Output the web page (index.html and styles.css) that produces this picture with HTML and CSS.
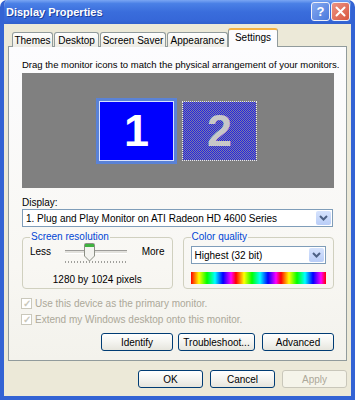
FILE: index.html
```html
<!DOCTYPE html>
<html lang="en">
<head>
    <meta charset="UTF-8">
    <title>Display Properties</title>
    <link rel="stylesheet" href="styles.css">
</head>
<body>
    <div class="window">
        <div class="titlebar">
            <span class="title">Display Properties</span>
            <div class="caption-buttons">
                <span class="cap-btn help">?</span>
                <span class="cap-btn close">
                    <svg width="11" height="11" viewBox="0 0 11 11"><path d="M1.5 1.5 L9.5 9.5 M9.5 1.5 L1.5 9.5" stroke="#fff" stroke-width="2" stroke-linecap="round"/></svg>
                </span>
            </div>
        </div>

        <div class="frame">
            <div class="tabs">
                <div class="tab">Themes</div>
                <div class="tab">Desktop</div>
                <div class="tab">Screen Saver</div>
                <div class="tab">Appearance</div>
                <div class="tab active">Settings</div>
            </div>

            <div class="panel">
                <div class="hint">Drag the monitor icons to match the physical arrangement of your monitors.</div>

                <div class="monitors">
                    <div class="monitor primary">
                        <div class="screen">1</div>
                    </div>
                    <div class="monitor secondary">
                        <div class="screen">2</div>
                    </div>
                </div>

                <div class="label">Display:</div>
                <div class="select wide">
                    <span>1. Plug and Play Monitor on ATI Radeon HD 4600 Series</span>
                    <span class="arrow"><svg width="9" height="6" viewBox="0 0 9 6"><path d="M1 1 L4.5 4.5 L8 1" fill="none" stroke="#4d6185" stroke-width="2"/></svg></span>
                </div>

                <div class="groups">
                    <fieldset class="group">
                        <legend>Screen resolution</legend>
                        <div class="slider-row">
                            <span>Less</span>
                            <div class="slider">
                                <div class="track"></div>
                                <div class="thumb">
                                    <svg width="11" height="19" viewBox="0 0 11 19">
                                        <path d="M0.5 1.5 Q0.5 0.5 1.5 0.5 L9.5 0.5 Q10.5 0.5 10.5 1.5 L10.5 13 L5.5 18 L0.5 13 Z" fill="#f3f3ef" stroke="#8c8f85"/>
                                        <rect x="1" y="1" width="9" height="3" fill="#3fb23f"/>
                                    </svg>
                                </div>
                                <div class="ticks"></div>
                            </div>
                            <span>More</span>
                        </div>
                        <div class="res">1280 by 1024 pixels</div>
                    </fieldset>

                    <fieldset class="group">
                        <legend>Color quality</legend>
                        <div class="select">
                            <span>Highest (32 bit)</span>
                            <span class="arrow"><svg width="9" height="6" viewBox="0 0 9 6"><path d="M1 1 L4.5 4.5 L8 1" fill="none" stroke="#4d6185" stroke-width="2"/></svg></span>
                        </div>
                        <div class="spectrum"></div>
                    </fieldset>
                </div>

                <label class="check"><span class="box">&#10003;</span>Use this device as the primary monitor.</label>
                <label class="check"><span class="box">&#10003;</span>Extend my Windows desktop onto this monitor.</label>

                <div class="panel-buttons">
                    <button class="btn">Identify</button>
                    <button class="btn">Troubleshoot...</button>
                    <button class="btn">Advanced</button>
                </div>
            </div>

            <div class="dialog-buttons">
                <button class="btn">OK</button>
                <button class="btn">Cancel</button>
                <button class="btn" disabled>Apply</button>
            </div>
        </div>
    </div>
</body>
</html>
```

FILE: styles.css
```css
body {
    margin: 0;
    font-family: 'Liberation Sans', Arial, sans-serif;
    font-size: 10px;
    color: #000;
    background: #fff;
}

.window {
    width: 355px;
    height: 400px;
    box-sizing: border-box;
    background-color: #ECE9D8;
    border: 4px solid #3363d4;
    border-top: none;
    border-radius: 7px 7px 0 0;
    overflow: hidden;
    display: flex;
    flex-direction: column;
}

.titlebar {
    height: 24px;
    margin: 0 -4px;
    padding: 0 5px 0 6px;
    display: flex;
    align-items: center;
    justify-content: space-between;
    background: linear-gradient(#7aa6f3 0%, #4a80e6 15%, #3a6ddc 50%, #3667d8 85%, #3160cc 100%);
    border-radius: 7px 7px 0 0;
}

.title {
    color: #fff;
    font-weight: bold;
    font-size: 11px;
    text-shadow: 1px 1px 0 #1d3f9c;
}

.caption-buttons {
    display: flex;
    gap: 1px;
    margin-top: -1px;
}

.cap-btn {
    width: 17px;
    height: 17px;
    border: 1px solid #f0f0f8;
    border-radius: 3px;
    display: flex;
    align-items: center;
    justify-content: center;
    color: #fff;
    font-weight: bold;
    font-size: 13px;
}

.help {
    background: linear-gradient(135deg, #86aaf0, #4a78dc);
}

.close {
    background: linear-gradient(135deg, #ec9484, #d8553e);
}

.frame {
    flex: 1;
    display: flex;
    flex-direction: column;
    padding: 3px 4px 0 4px;
}

.tabs {
    display: flex;
    align-items: flex-end;
    height: 19px;
    padding-left: 4px;
    gap: 1px;
    position: relative;
    z-index: 1;
}

.tab {
    box-sizing: border-box;
    height: 15px;
    margin-bottom: -1px;
    border: 1px solid #919b9c;
    border-bottom: none;
    border-radius: 3px 3px 0 0;
    background: linear-gradient(#fefefe, #ecebe5);
    display: flex;
    align-items: center;
    justify-content: center;
    white-space: nowrap;
    padding-top: 1px;
}

.tab:nth-child(1) { width: 41px; }
.tab:nth-child(2) { width: 45px; }
.tab:nth-child(3) { width: 66px; }
.tab:nth-child(4) { width: 61px; }

.tab.active {
    width: 50px;
    height: 19px;
    margin-left: -1px;
    background: #fcfcfe;
    border-top: 2px solid #f4b243;
    align-items: flex-start;
    padding-top: 2px;
}

.panel {
    height: 315px;
    box-sizing: border-box;
    border: 1px solid #919b9c;
    background: linear-gradient(#fcfcfe 0%, #f8f7f3 70%, #f3f2ec 100%);
    padding: 12px 12px 0 13px;
    display: flex;
    flex-direction: column;
}

.hint {
    height: 14px;
    white-space: nowrap;
    font-size: 9.5px;
}

.monitors {
    height: 115px;
    background: #808080;
    display: flex;
    justify-content: center;
    align-items: center;
    gap: 5px;
    padding-right: 3px;
    box-sizing: border-box;
}

.monitor {
    display: flex;
    box-sizing: border-box;
}

.primary {
    width: 81px;
    height: 66px;
    padding: 3px;
    background: #5a82d6;
}

.primary .screen {
    flex: 1;
    border: 1px solid #d8e2ff;
    background: #0000fe;
    color: #fff;
}

.secondary {
    width: 75px;
    height: 60px;
    border: 1px dotted #e8e8f0;
}

.secondary .screen {
    flex: 1;
    background: repeating-conic-gradient(#2020e8 0 25%, #8080a0 0 50%) 0 0 / 2px 2px;
    color: #c8c8c8;
}

.screen {
    display: flex;
    align-items: center;
    justify-content: center;
    font-weight: bold;
    font-size: 45px;
    line-height: 1;
}

.label {
    margin-top: 9px;
    height: 12px;
}

.select {
    height: 18px;
    box-sizing: border-box;
    border: 1px solid #7f9db9;
    background: #fff;
    display: flex;
    align-items: center;
    justify-content: space-between;
    padding-left: 3px;
    padding-right: 1px;
}

.select.wide {
    margin-right: 1px;
}

.arrow {
    width: 15px;
    height: 14px;
    border-radius: 2px;
    background: linear-gradient(#d6e3fd, #b9cdf7);
    display: flex;
    align-items: center;
    justify-content: center;
}

.groups {
    display: flex;
    gap: 10px;
    margin-top: 5px;
}

.group {
    margin: 0;
    width: 151px;
    height: 57px;
    box-sizing: border-box;
    border: 1px solid #d0d0bf;
    border-radius: 4px;
    padding: 0 7px;
    min-width: 0;
}

.group + .group {
    width: 152px;
}

.group legend {
    color: #0046d5;
    padding: 0 1px;
    line-height: 10px;
}

.slider-row {
    display: flex;
    justify-content: space-between;
    align-items: flex-start;
    margin-top: 4px;
    height: 22px;
}

.slider {
    width: 62px;
    height: 22px;
    position: relative;
}

.track {
    margin-top: 4px;
    height: 2px;
    border-top: 1px solid #9d9c99;
    border-bottom: 1px solid #fff;
    background: #e2e1dc;
}

.thumb {
    position: absolute;
    left: 19px;
    top: -3px;
    line-height: 0;
}

.ticks {
    position: absolute;
    left: 0;
    right: 0;
    top: 15px;
    height: 2px;
    background: repeating-linear-gradient(90deg, #a0a09c 0 1px, transparent 1px 3px);
}

.res {
    text-align: center;
    margin-top: 6px;
}

.group .select {
    margin-top: 4px;
}

.spectrum {
    height: 12px;
    margin-top: 8px;
    background: repeating-linear-gradient(90deg, #ff0000 0, #ffff00 8px, #00ff00 16px, #00ffff 24px, #0000ff 32px, #ff00ff 40px, #ff0000 45px);
}

.check {
    display: flex;
    align-items: center;
    gap: 3px;
    color: #aca899;
    height: 16px;
    margin-left: -1px;
}

.check:first-of-type {
    margin-top: 6px;
}

.box {
    width: 11px;
    height: 11px;
    box-sizing: border-box;
    border: 1px solid #cac8bb;
    background: #fff;
    color: #cac8bb;
    font-size: 10px;
    line-height: 10px;
    text-align: center;
    font-weight: bold;
}

.panel-buttons {
    display: flex;
    justify-content: flex-end;
    gap: 5px;
    margin-top: 6px;
}

.btn {
    height: 18px;
    min-width: 64px;
    box-sizing: border-box;
    border: 1px solid #003c74;
    border-radius: 3px;
    background: linear-gradient(#ffffff 0%, #f4f4f0 50%, #e6e5dd 100%);
    font-family: 'Liberation Sans', Arial, sans-serif;
    font-size: 10px;
    color: #000;
    padding: 0 4px;
}

.panel-buttons .btn:nth-child(1) { width: 72px; }
.panel-buttons .btn:nth-child(2) { width: 77px; }
.panel-buttons .btn:nth-child(3) { width: 72px; margin-left: 2px; }

.btn:disabled {
    border-color: #c9c7ba;
    color: #aca899;
    background: #f5f4ea;
}

.dialog-buttons {
    display: flex;
    justify-content: flex-end;
    gap: 7px;
    margin-top: 9px;
}

.dialog-buttons .btn {
    width: 65px;
}
```
